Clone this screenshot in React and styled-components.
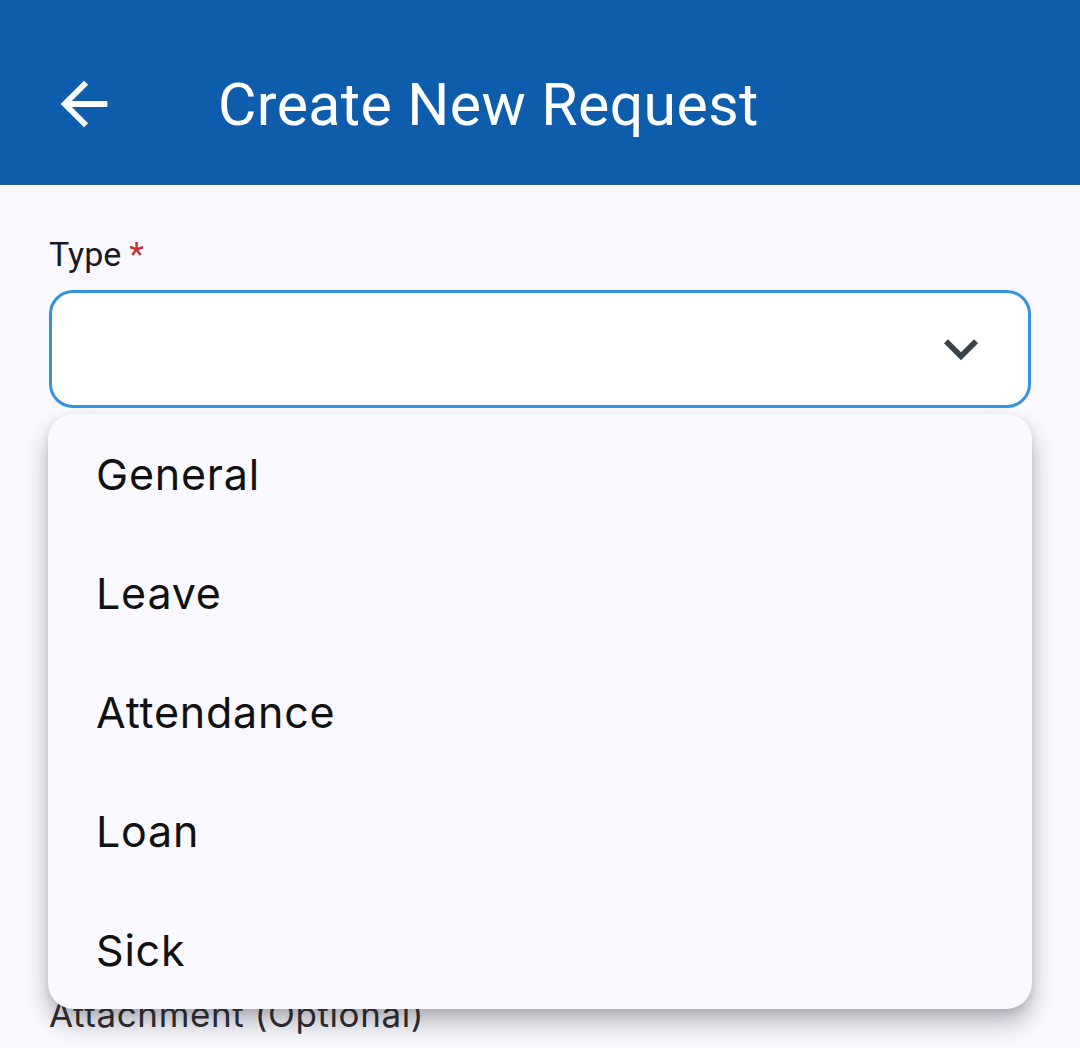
import React from "react";
import styled, { createGlobalStyle } from "styled-components";

const GlobalStyle = createGlobalStyle`
  html, body {
    margin: 0;
    padding: 0;
    background: #f8f8fe;
  }
  * {
    box-sizing: border-box;
  }
`;

const Screen = styled.div`
  width: 1080px;
  height: 1048px;
  overflow: hidden;
  background: #f8f8fe;
  font-family: Roboto, "Liberation Sans", sans-serif;
`;

const AppBar = styled.header`
  height: 185px;
  background: #0e5dac;
  display: flex;
  align-items: center;
  padding: 24px 0 0 48px;
  border-bottom: 1px solid #2a5f96;
`;

const BackButton = styled.button`
  width: 72px;
  height: 72px;
  padding: 0;
  background: none;
  border: none;
  display: flex;
  align-items: center;
  justify-content: center;
  color: #fff;
  margin-right: 98px;
`;

const Title = styled.h1`
  margin: 0;
  color: #fff;
  font-weight: 400;
  font-size: 59px;
  letter-spacing: 0.4px;
`;

const Form = styled.div`
  position: relative;
  padding: 45px 49px 0 49px;
`;

const Field = styled.div`
  display: flex;
  flex-direction: column;
  margin-bottom: ${(p) => p.gap || 0}px;
`;

const Label = styled.label`
  font-family: ${(p) =>
    p.soft ? 'Inter, "Noto Sans", sans-serif' : 'Roboto, "Liberation Sans", sans-serif'};
  font-size: ${(p) => (p.soft ? 35 : 34)}px;
  letter-spacing: ${(p) => (p.soft ? 0.6 : 0)}px;
  color: ${(p) => (p.soft ? "#2a2a2e" : "#1b1b1f")};
  line-height: 48px;
  margin-bottom: 12px;

  span {
    color: #c62f2f;
    margin-left: 8px;
  }
`;

const SelectBox = styled.div`
  height: 118px;
  border: 3px solid #3692dc;
  border-radius: 24px;
  background: #fff;
  display: flex;
  align-items: center;
  justify-content: flex-end;
  padding-right: 33px;
  color: #3c4047;
`;

const Menu = styled.ul`
  position: absolute;
  top: 229px;
  left: 48px;
  right: 48px;
  margin: 0;
  padding: 0;
  list-style: none;
  background: #f9f9ff;
  border-radius: 26px;
  box-shadow: 0 14px 22px rgba(40, 38, 50, 0.3), 0 3px 8px rgba(40, 38, 50, 0.12);
  z-index: 10;
`;

const MenuItem = styled.li`
  height: 119px;
  display: flex;
  align-items: center;
  padding-left: 48px;
  font-family: Inter, "Noto Sans", sans-serif;
  font-size: 43px;
  color: #111;
  letter-spacing: 0.8px;
`;

const options = ["General", "Leave", "Attendance", "Loan", "Sick"];

export default function App() {
  return (
    <Screen>
      <GlobalStyle />
      <AppBar>
        <BackButton aria-label="back">
          <svg width="70" height="70" viewBox="0 0 24 24" fill="currentColor">
            <path d="M20 11H7.83l5.59-5.59L12 4l-8 8 8 8 1.41-1.41L7.83 13H20v-2z" />
          </svg>
        </BackButton>
        <Title>Create New Request</Title>
      </AppBar>
      <Form>
        <Field gap={582}>
          <Label>
            Type<span>*</span>
          </Label>
          <SelectBox>
            <svg width="68" height="68" viewBox="0 0 24 24" fill="currentColor">
              <path d="M16.59 8.59L12 13.17 7.41 8.59 6 10l6 6 6-6z" />
            </svg>
          </SelectBox>
        </Field>
        <Field>
          <Label soft>Attachment (Optional)</Label>
        </Field>
        <Menu>
          {options.map((o) => (
            <MenuItem key={o}>{o}</MenuItem>
          ))}
        </Menu>
      </Form>
    </Screen>
  );
}
